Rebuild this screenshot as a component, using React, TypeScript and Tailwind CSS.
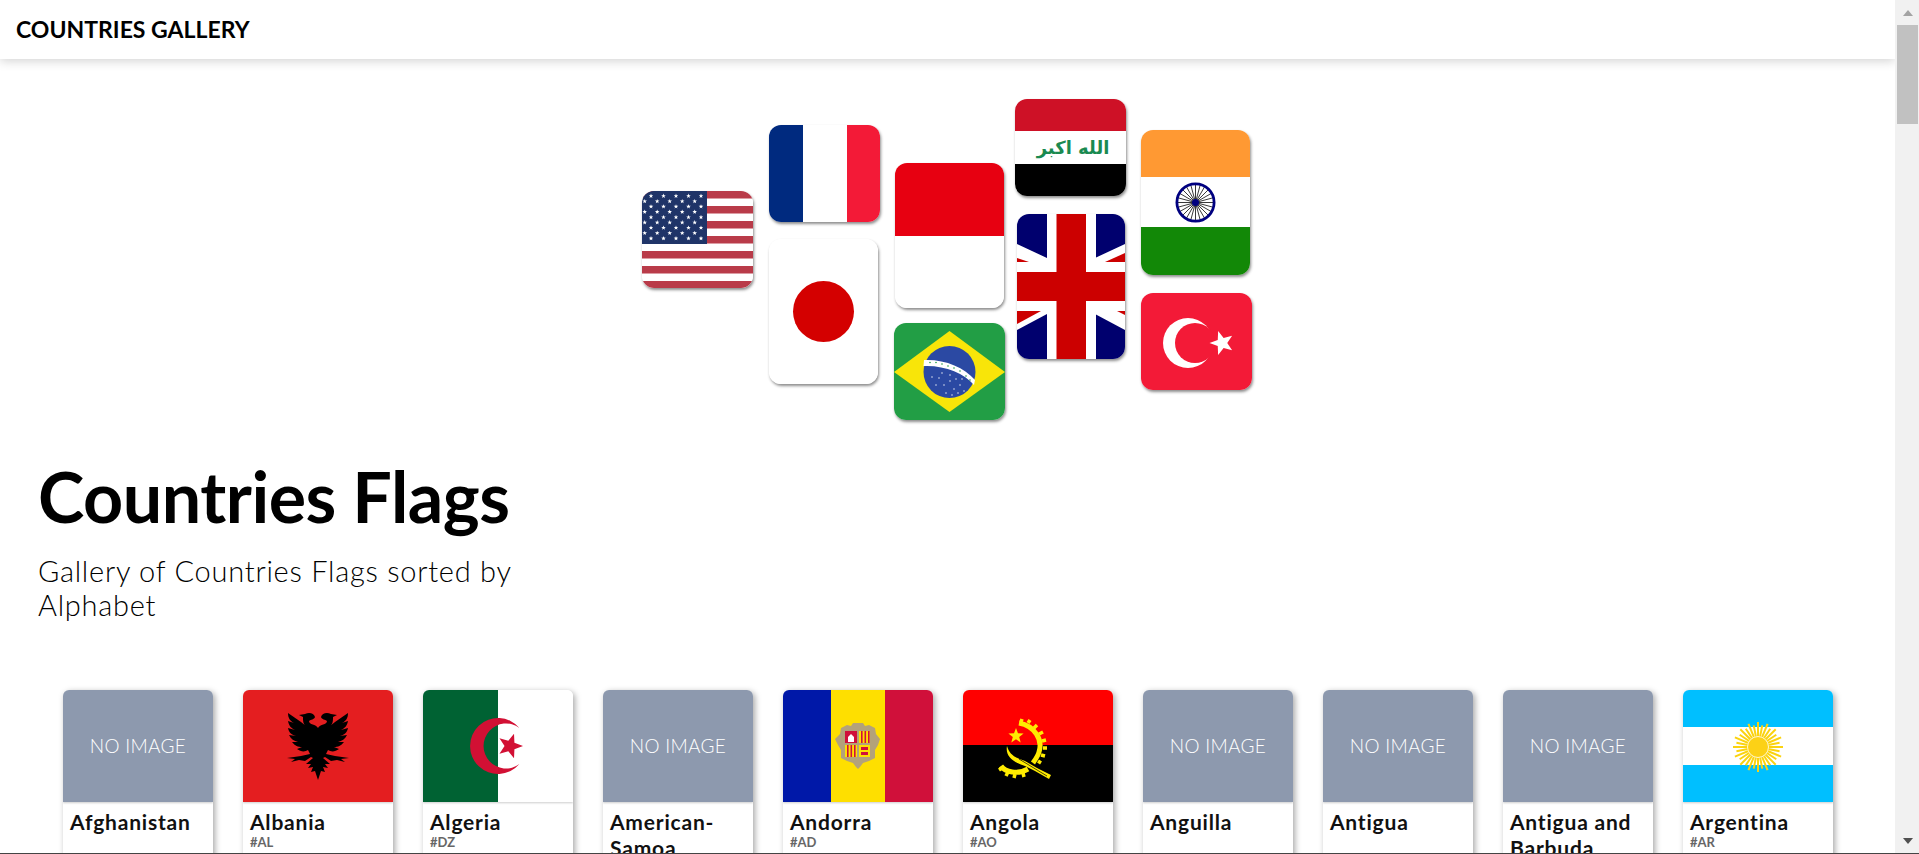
import React from "react";

const font = { fontFamily: '"Lato", "Liberation Sans", sans-serif' };

function Star({ cx, cy, r, fill, rot = 0 }: { cx: number; cy: number; r: number; fill: string; rot?: number }) {
  const pts: string[] = [];
  for (let i = 0; i < 10; i++) {
    const a = ((-90 + rot + i * 36) * Math.PI) / 180;
    const rr = i % 2 === 0 ? r : r * 0.42;
    pts.push(`${(cx + rr * Math.cos(a)).toFixed(2)},${(cy + rr * Math.sin(a)).toFixed(2)}`);
  }
  return <polygon points={pts.join(" ")} fill={fill} />;
}

function Usa() {
  const stars: React.ReactNode[] = [];
  for (let row = 0; row < 9; row++) {
    for (let c = 0; c < 5; c++) {
      const x = (row % 2 === 0 ? 9 : 2.7) + c * 12.5;
      stars.push(<Star key={`${row}-${c}`} cx={x} cy={5 + row * 5.3} r={2.4} fill="#fff" />);
    }
  }
  return (
    <svg viewBox="0 0 111 97" className="block h-full w-full" preserveAspectRatio="none">
      <rect width="111" height="97" fill="#fff" />
      {[0, 1, 2, 3, 4, 5, 6].map((i) => (
        <rect key={i} y={i * 15} width="111" height="7.5" fill="#b93b49" />
      ))}
      <rect width="65" height="53" fill="#1f3468" />
      {stars}
    </svg>
  );
}

function Stripes({ colors, dir }: { colors: [string, number][]; dir: "h" | "v" }) {
  return (
    <div className={dir === "h" ? "flex h-full w-full flex-col" : "flex h-full w-full flex-row"}>
      {colors.map(([c, f], i) => (
        <div key={i} style={{ background: c, flex: f }} />
      ))}
    </div>
  );
}

function Japan() {
  return (
    <div className="flex h-full w-full items-center justify-center bg-white">
      <div className="h-[61px] w-[61px] rounded-full bg-[#d40000]" />
    </div>
  );
}

function Brazil() {
  return (
    <svg viewBox="0 0 111 97" className="block h-full w-full">
      <rect width="111" height="97" fill="#229e45" />
      <polygon points="0,49 55.5,8 111,49 55.5,89" fill="#f8e509" />
      <circle cx="55.5" cy="49" r="26" fill="#2b49a3" />
      <path d="M30 37 C50 36 70 44 81 57 L80 62 C70 50 50 42 29.5 43 Z" fill="#fff" />
      {[[36, 39.5], [42, 39.5], [48, 41], [54, 43], [60, 45], [66, 48], [72, 53], [76, 57]].map(([x, y], i) => (
        <circle key={i} cx={x} cy={y} r="0.8" fill="#229e45" />
      ))}
      {[[45, 55], [50, 62], [56, 58], [60, 66], [66, 62], [52, 70], [42, 62], [62, 56], [70, 68], [48, 50], [56, 52], [58, 72], [64, 70], [38, 54], [68, 56]].map(([x, y], i) => (
        <circle key={i} cx={x} cy={y} r="0.7" fill="#fff" />
      ))}
    </svg>
  );
}

function Iraq() {
  return (
    <svg viewBox="0 0 111 97" className="block h-full w-full">
      <rect width="111" height="32" fill="#ce1126" />
      <rect y="32" width="111" height="33" fill="#fff" />
      <rect y="65" width="111" height="32" fill="#000" />
      <text x="58" y="55" textAnchor="middle" fontSize="18" fontWeight="700" fill="#1a8a50" fontFamily='"DejaVu Sans", sans-serif' direction="rtl">الله اكبر</text>
    </svg>
  );
}

function Uk() {
  return (
    <svg viewBox="0 0 108 145" className="block h-full w-full">
      <rect width="108" height="145" fill="#00006e" />
      <polygon points="0,30 30,44 78,44 108,30 108,116 78,100 30,100 0,116" fill="#fff" />
      <polygon points="0,44 12,48 0,48" fill="#cc0000" />
      <polygon points="88,48 108,39 108,48" fill="#cc0000" />
      <polygon points="0,97 24,97 0,110" fill="#cc0000" />
      <polygon points="100,97 108,97 108,101" fill="#cc0000" />
      <rect x="30" width="49" height="145" fill="#fff" />
      <rect y="58" width="108" height="29" fill="#cc0000" />
      <rect x="39.5" width="29.5" height="145" fill="#cc0000" />
    </svg>
  );
}

function India() {
  const spokes = Array.from({ length: 24 }, (_, i) => i * 15);
  return (
    <svg viewBox="0 0 109 145" className="block h-full w-full">
      <rect width="109" height="47" fill="#ff9933" />
      <rect y="47" width="109" height="50" fill="#fff" />
      <rect y="97" width="109" height="48" fill="#128807" />
      {spokes.map((a) => (
        <line key={a} x1="54.5" y1="72.5" x2={54.5 + 18 * Math.cos((a * Math.PI) / 180)} y2={72.5 + 18 * Math.sin((a * Math.PI) / 180)} stroke="#222" strokeWidth="0.9" />
      ))}
      <circle cx="54.5" cy="72.5" r="18.6" fill="none" stroke="#000080" strokeWidth="2.8" />
      <circle cx="54.5" cy="72.5" r="3.5" fill="#000080" />
    </svg>
  );
}

function Turkey() {
  return (
    <svg viewBox="0 0 111 97" className="block h-full w-full">
      <rect width="111" height="97" fill="#f31a37" />
      <circle cx="47" cy="50" r="25" fill="#fff" />
      <circle cx="54" cy="50" r="20" fill="#f31a37" />
      <Star cx={81} cy={50} r={12.5} fill="#fff" rot={-90} />
    </svg>
  );
}

const big = "h-[145px] w-[109px]";
const small = "h-[97px] w-[111px]";

function Tile({ className, children }: { className: string; children: React.ReactNode }) {
  return (
    <div className={`${className} overflow-hidden rounded-[12px] shadow-[1px_2px_3px_rgba(0,0,0,0.45)]`}>{children}</div>
  );
}

function Collage() {
  return (
    <div className="ml-[642px] flex h-[340px] items-start">
      <div className="mt-[132px]">
        <Tile className={small}>
          <Usa />
        </Tile>
      </div>
      <div className="ml-[16px] mt-[66px] flex flex-col gap-[17px]">
        <Tile className={small}>
          <Stripes dir="v" colors={[["#002a7f", 34], ["#ffffff", 44], ["#f31a37", 33]]} />
        </Tile>
        <Tile className={big}>
          <Japan />
        </Tile>
      </div>
      <div className="ml-[14px] mt-[104px] flex flex-col gap-[15px]">
        <Tile className={`${big} ml-[1px]`}>
          <Stripes dir="h" colors={[["#e70011", 1], ["#ffffff", 1]]} />
        </Tile>
        <Tile className={small}>
          <Brazil />
        </Tile>
      </div>
      <div className="ml-[10px] mt-[40px] flex flex-col gap-[18px]">
        <Tile className={small}>
          <Iraq />
        </Tile>
        <Tile className="ml-[2px] h-[145px] w-[108px]">
          <Uk />
        </Tile>
      </div>
      <div className="ml-[15px] mt-[71px] flex flex-col gap-[18px]">
        <Tile className={big}>
          <India />
        </Tile>
        <Tile className={small}>
          <Turkey />
        </Tile>
      </div>
    </div>
  );
}

function Albania() {
  const half =
    "M75 38 C77 34 84 35 84 31 C82 29 79 30 78 27 C79 23 84 22 88 24 L94 25 L90 27 C90 31 90 34 87 36 L92 32 L105 23 C105 28 103 31 99 33 L105 31 C104 36 102 38 98 40 L105 38 C104 43 101 45 97 46 L104 45 C102 49 99 51 95 52 L101 52 C98 56 95 57 91 57 L96 59 C92 62 88 62 85 60 L83 64 L92 66 L106 68 L98 69 L102 72 L94 70 L88 71 L82 67 L80 68 L87 74 L82 74 L85 78 L80 77 L82 82 L78 81 L75 90 Z";
  return (
    <svg viewBox="0 0 150 112" className="block h-full w-full">
      <rect width="150" height="112" fill="#e41e20" />
      <path d={half} fill="#000" />
      <path d={half} fill="#000" transform="translate(150 0) scale(-1 1)" />
    </svg>
  );
}

function Algeria() {
  return (
    <svg viewBox="0 0 150 112" className="block h-full w-full">
      <rect width="75" height="112" fill="#006233" />
      <rect x="75" width="75" height="112" fill="#fff" />
      <path d="M96.4 37.9 A28 28 0 1 0 96.4 74.1 A22.5 22.5 0 1 1 96.4 37.9 Z" fill="#d21034" />
      <Star cx={87} cy={56} r={13} fill="#d21034" rot={90} />
    </svg>
  );
}

function Andorra() {
  return (
    <svg viewBox="0 0 150 112" className="block h-full w-full">
      <rect width="48" height="112" fill="#0018a8" />
      <rect x="48" width="54" height="112" fill="#fedf00" />
      <rect x="102" width="48" height="112" fill="#d0103a" />
      <path d="M58 38 L64 35 L68 36 L70 33 L80 33 L82 36 L86 35 L92 38 L93 44 L97 49 L95 55 L92 60 L92 68 L86 71 L80 73 L77 77 L75 79 L73 77 L70 73 L64 71 L58 68 L58 60 L55 55 L52 49 L57 44 Z" fill="#b3a27a" />
      <rect x="62" y="41" width="12" height="12" fill="#d0103a" />
      <path d="M65 52 L65 47 L68 44 L71 47 L71 52 Z" fill="#fff" />
      <rect x="76" y="41" width="11" height="12" fill="#fedf00" />
      <rect x="62" y="55" width="12" height="12" fill="#fedf00" />
      <rect x="76" y="55" width="11" height="12" fill="#fedf00" />
      {[78, 81.5, 85].map((x) => <rect key={x} x={x} y="41" width="1.6" height="12" fill="#d0103a" />)}
      {[64, 67.5, 71].map((x) => <rect key={x} x={x} y="55" width="1.6" height="12" fill="#d0103a" />)}
      <rect x="78" y="57" width="7" height="3" fill="#d0103a" />
      <rect x="78" y="62" width="7" height="3" fill="#d0103a" />
    </svg>
  );
}

function Angola() {
  return (
    <svg viewBox="0 0 150 112" className="block h-full w-full">
      <rect width="150" height="55" fill="#ff0000" />
      <rect y="55" width="150" height="57" fill="#000" />
      <path d="M56 33 C72 36 80 50 76 62 C75 66 72 70 70 73" fill="none" stroke="#ffec00" strokeWidth="5" />
      <path d="M38 76 C42 82 55 85 65 79" fill="none" stroke="#ffec00" strokeWidth="5" />
      <path d="M58 32 l1-3 M65 33 l2-3 M71 38 l3-3 M76 44 l4-2 M79 51 l4-1 M80 58 l4 0 M78 65 l4 1 M75 71 l3 2 M39 78 l-3 2 M45 82 l-2 4 M52 84 l-1 4 M60 83 l1 4" stroke="#ffec00" strokeWidth="3.5" />
      <path d="M44 56 C42 66 50 72 62 76 L72 81 L86 89 L88 85 L74 78 L62 71 C52 68 46 64 44 56 Z" fill="#ffec00" />
      <path d="M56 69 L84 86" stroke="#000" strokeWidth="0.7" />
      <Star cx={53} cy={46} r={8} fill="#ffec00" />
    </svg>
  );
}

function Argentina() {
  const rays = Array.from({ length: 32 }, (_, i) => (i * 360) / 32);
  return (
    <svg viewBox="0 0 150 112" className="block h-full w-full">
      <rect width="150" height="37" fill="#00bfff" />
      <rect y="37" width="150" height="38" fill="#fff" />
      <rect y="75" width="150" height="37" fill="#00bfff" />
      {rays.map((a, i) => (
        <line key={a} x1="75" y1="57" x2={75 + (i % 2 ? 22 : 25) * Math.cos((a * Math.PI) / 180)} y2={57 + (i % 2 ? 22 : 25) * Math.sin((a * Math.PI) / 180)} stroke="#fbd30f" strokeWidth="2" />
      ))}
      <circle cx="75" cy="57" r="10.5" fill="#fcd116" stroke="#fff" strokeWidth="0.8" />
    </svg>
  );
}

function NoImage() {
  return (
    <div className="flex h-full w-full items-center justify-center bg-[#8d99ae] text-[19px] font-light tracking-[0.3px] text-white">
      NO IMAGE
    </div>
  );
}

const countries: { name: string; code?: string; flag: React.ReactNode }[] = [
  { name: "Afghanistan", flag: <NoImage /> },
  { name: "Albania", code: "#AL", flag: <Albania /> },
  { name: "Algeria", code: "#DZ", flag: <Algeria /> },
  { name: "American-Samoa", flag: <NoImage /> },
  { name: "Andorra", code: "#AD", flag: <Andorra /> },
  { name: "Angola", code: "#AO", flag: <Angola /> },
  { name: "Anguilla", flag: <NoImage /> },
  { name: "Antigua", flag: <NoImage /> },
  { name: "Antigua and Barbuda", flag: <NoImage /> },
  { name: "Argentina", code: "#AR", flag: <Argentina /> },
];

function Card({ name, code, flag }: { name: string; code?: string; flag: React.ReactNode }) {
  return (
    <div className="h-[200px] overflow-hidden rounded-[6px] bg-white shadow-[2px_2px_6px_rgba(0,0,0,0.35)]">
      <div className="h-[112px] shadow-[0_1px_2px_rgba(0,0,0,0.2)]">{flag}</div>
      <div className="px-[7px] pt-[7px]">
        <div className="text-[21px] font-bold leading-[26px] tracking-[0.8px] text-[#111]">{name}</div>
        {code && <div className="text-[13px] font-bold leading-[15px] text-[#666]">{code}</div>}
      </div>
    </div>
  );
}

export default function App() {
  return (
    <div className="flex h-[854px] overflow-hidden border-b border-[#444] bg-white text-black" style={font}>
      <div className="flex min-w-0 flex-1 flex-col overflow-hidden">
        <header className="relative z-10 flex h-[59px] shrink-0 items-center bg-white pl-[16px] text-[23px] font-bold shadow-[0_2px_10px_rgba(0,0,0,0.18)]">
          COUNTRIES GALLERY
        </header>
        <Collage />
        <div className="pl-[38px] pt-[57px]">
          <h1 className="text-[70px] font-bold leading-[80px] tracking-[-0.5px]">Countries Flags</h1>
          <p className="mt-[18px] w-[490px] text-[29px] font-light leading-[34px] tracking-[0.75px]">Gallery of Countries Flags sorted by Alphabet</p>
        </div>
        <div className="mt-[68px] grid grid-cols-[repeat(10,150px)] gap-x-[30px] pl-[63px]">
          {countries.map((c) => (
            <Card key={c.name} {...c} />
          ))}
        </div>
      </div>
      <div className="flex w-[24px] shrink-0 flex-col items-center bg-[#f1f1f1] pl-[1px]">
        <div className="flex h-[25px] items-center justify-center">
          <div className="h-0 w-0 border-x-[5.5px] border-b-[6px] border-x-transparent border-b-[#a3a3a3]" />
        </div>
        <div className="h-[99px] w-[21px] bg-[#c1c1c1]" />
        <div className="flex-1" />
        <div className="flex h-[25px] items-center justify-center">
          <div className="h-0 w-0 border-x-[5.5px] border-t-[6px] border-x-transparent border-t-[#505050]" />
        </div>
      </div>
    </div>
  );
}
